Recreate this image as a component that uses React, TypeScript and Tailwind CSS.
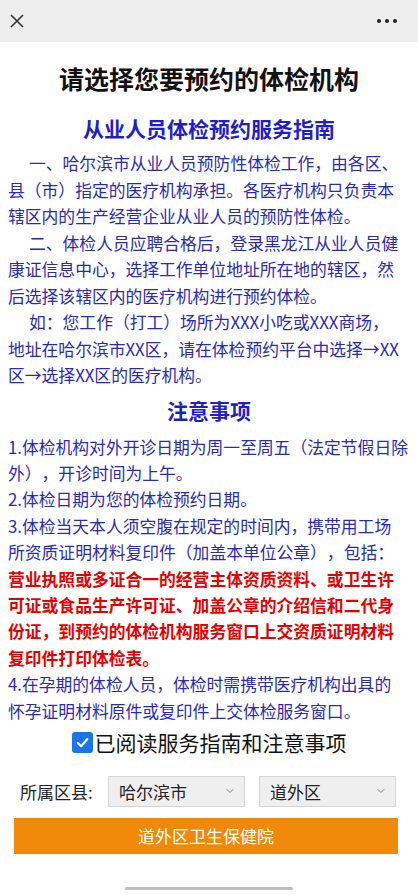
import { ChevronDown } from 'lucide-react';

const font = { fontFamily: '"Noto Sans CJK SC", "Noto Sans", sans-serif' };

const guide = [
  [
    '一、哈尔滨市从业人员预防性体检工作，由各区、',
    '县（市）指定的医疗机构承担。各医疗机构只负责本',
    '辖区内的生产经营企业从业人员的预防性体检。',
  ],
  [
    '二、体检人员应聘合格后，登录黑龙江从业人员健',
    '康证信息中心，选择工作单位地址所在地的辖区，然',
    '后选择该辖区内的医疗机构进行预约体检。',
  ],
  [
    '如：您工作（打工）场所为XXX小吃或XXX商场，',
    '地址在哈尔滨市XX区，请在体检预约平台中选择→XX',
    '区→选择XX区的医疗机构。',
  ],
];

// [text, red]
const notes: [string, boolean][] = [
  ['1.体检机构对外开诊日期为周一至周五（法定节假日除', false],
  ['外），开诊时间为上午。', false],
  ['2.体检日期为您的体检预约日期。', false],
  ['3.体检当天本人须空腹在规定的时间内，携带用工场', false],
  ['所资质证明材料复印件（加盖本单位公章），包括：', false],
  ['营业执照或多证合一的经营主体资质资料、或卫生许', true],
  ['可证或食品生产许可证、加盖公章的介绍信和二代身', true],
  ['份证，到预约的体检机构服务窗口上交资质证明材料', true],
  ['复印件打印体检表。', true],
  ['4.在孕期的体检人员，体检时需携带医疗机构出具的', false],
  ['怀孕证明材料原件或复印件上交体检服务窗口。', false],
];

export default function App() {
  return (
    <div className="min-h-[895px] bg-white flex flex-col [text-spacing-trim:space-all]" style={font}>
      <div className="h-[42px] bg-[#ededed] flex items-center justify-between px-[9px] shrink-0">
        <svg width="16" height="16" viewBox="0 0 16 16" className="text-[#333]">
          <path d="M2 2 L14 14 M14 2 L2 14" stroke="currentColor" strokeWidth="1.6" fill="none" />
        </svg>
        <div className="flex gap-[4px] pr-[12px]">
          <span className="w-[4px] h-[4px] rounded-full bg-[#222]" />
          <span className="w-[4px] h-[4px] rounded-full bg-[#222]" />
          <span className="w-[4px] h-[4px] rounded-full bg-[#222]" />
        </div>
      </div>

      <h1 className="mt-[18px] text-center text-[25px] leading-[36px] font-bold text-[#111]">
        请选择您要预约的体检机构
      </h1>
      <h2 className="mt-[17px] text-center text-[21px] leading-[30px] font-bold text-[#1f1fc8]">
        从业人员体检预约服务指南
      </h2>

      <div className="mt-[7px] px-[8px] text-[16.8px] leading-[26.5px] text-[#2b2bae]">
        {guide.map((para, i) => (
          <div key={i}>
            {para.map((line, j) => (
              <div key={j} className={`whitespace-nowrap ${j === 0 ? 'pl-[21px]' : ''}`}>
                {line}
              </div>
            ))}
          </div>
        ))}
      </div>

      <h2 className="mt-[6px] text-center text-[21px] leading-[30px] font-bold text-[#1f1fc8]">
        注意事项
      </h2>

      <div className="mt-[9px] px-[8px] text-[16.8px] leading-[26.4px] text-[#2b2bae]">
        {notes.map(([line, red], i) => (
          <div key={i} className={`whitespace-nowrap ${red ? 'font-bold text-[#e80000]' : ''}`}>
            {line}
          </div>
        ))}
      </div>

      <label className="mt-[4px] flex items-center justify-center h-[30px] text-[21px] text-[#111]">
        <span className="w-[21px] h-[21px] rounded-[3px] bg-[#1a73e8] flex items-center justify-center mr-[2px]">
          <svg width="15" height="15" viewBox="0 0 16 16">
            <path d="M3 8.5 L6.5 12 L13 4.5" stroke="white" strokeWidth="2.4" fill="none" strokeLinecap="round" strokeLinejoin="round" />
          </svg>
        </span>
        已阅读服务指南和注意事项
      </label>

      <div className="mt-[18px] flex items-center pl-[20px] pr-[22px] text-[17px] text-[#222]">
        <span className="w-[88px] shrink-0">所属区县:</span>
        <div className="w-[137px] h-[31px] bg-[#efefef] border border-[#d4d4d4] flex items-center justify-between pl-[10px] pr-[8px]">
          <span>哈尔滨市</span>
          <ChevronDown size={12} strokeWidth={1.5} className="text-[#555]" />
        </div>
        <div className="ml-[14px] w-[137px] h-[31px] bg-[#efefef] border border-[#d4d4d4] flex items-center justify-between pl-[10px] pr-[8px]">
          <span>道外区</span>
          <ChevronDown size={12} strokeWidth={1.5} className="text-[#555]" />
        </div>
      </div>

      <button className="mt-[11px] ml-[14px] mr-[20px] h-[36px] bg-[#f0890a] text-white text-[17px] flex items-center justify-center">
        道外区卫生保健院
      </button>

      <div className="mt-[33px] flex justify-center">
        <div className="w-[168px] h-[3px] rounded-full bg-[#bdbdbd]" />
      </div>
      <div className="flex-1" />
    </div>
  );
}
